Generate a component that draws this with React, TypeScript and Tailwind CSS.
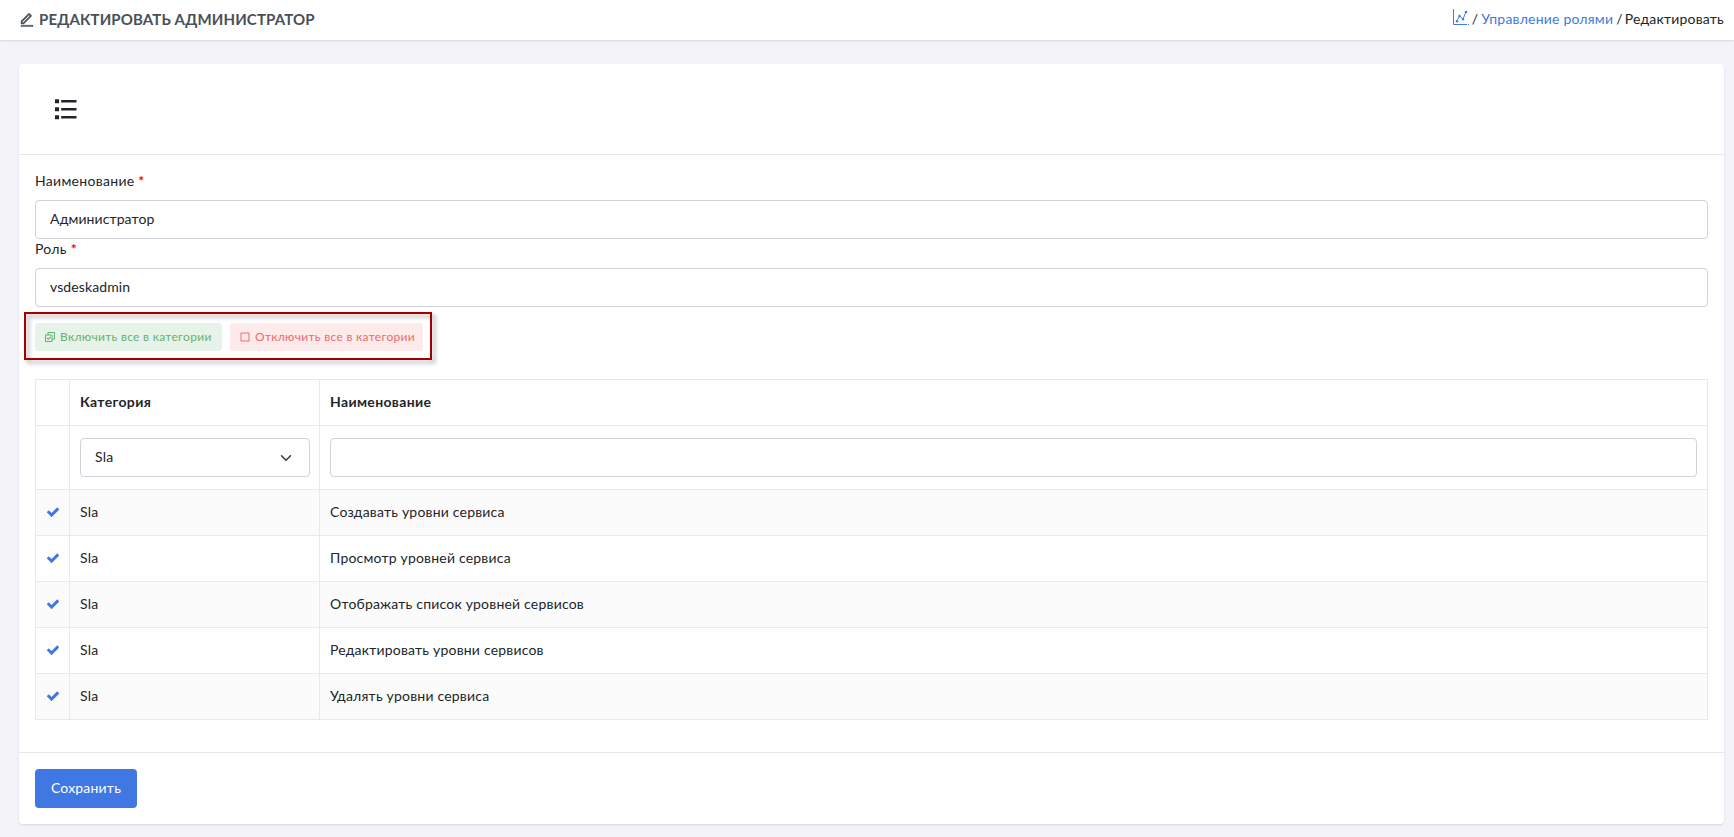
import { useState } from 'react';
import { RiCheckboxBlankLine, RiCheckboxMultipleLine, RiEditLine } from 'react-icons/ri';

interface Permission {
  id: string;
  category: string;
  title: string;
  enabled: boolean;
}

const initialPermissions: Permission[] = [
  { id: 'create', category: 'Sla', title: 'Создавать уровни сервиса', enabled: true },
  { id: 'view', category: 'Sla', title: 'Просмотр уровней сервиса', enabled: true },
  { id: 'list', category: 'Sla', title: 'Отображать список уровней сервисов', enabled: true },
  { id: 'update', category: 'Sla', title: 'Редактировать уровни сервисов', enabled: true },
  { id: 'delete', category: 'Sla', title: 'Удалять уровни сервиса', enabled: true },
];

function CheckMark() {
  return (
    <svg viewBox="0 0 1792 1792" className="w-[14px] h-[14px]" fill="currentColor">
      <path d="M1671 566q0 40-28 68l-724 724-136 136q-28 28-68 28t-68-28l-136-136-362-362q-28-28-28-68t28-68l136-136q28-28 68-28t68 28l294 295 656-657q28-28 68-28t68 28l136 136q28 28 28 68z" />
    </svg>
  );
}

function ListIcon() {
  return (
    <svg viewBox="0 0 22 21" className="w-[22px] h-[21px]" fill="currentColor">
      <path d="M0 0.3h4v4h-4zM0 8.3h4v4h-4zM0 16.3h4v4h-4z" />
      <path d="M6.2 1h15.3v2.5h-15.3zM6.2 9h15.3v2.5h-15.3zM6.2 17h15.3v2.5h-15.3z" />
    </svg>
  );
}

function ChartIcon() {
  return (
    <svg viewBox="0 0 16 16" className="w-4 h-4" fill="none" stroke="currentColor">
      <path d="M0.5 0V15.5H14M15 15.5H16" />
      <path d="M4 12L6.5 7L10 10L13 3" />
      <g fill="currentColor" stroke="none">
        <circle cx="4" cy="12.3" r="1.2" />
        <circle cx="6.5" cy="7" r="1.2" />
        <circle cx="10" cy="10.3" r="1.2" />
        <circle cx="13" cy="3" r="1.3" />
      </g>
    </svg>
  );
}

function Field({ label, initial }: { label: string; initial: string }) {
  const [value, setValue] = useState(initial);

  return (
    <label className="block">
      <span className="block h-[21px] leading-[19px] mb-2 tracking-[0.3px]">
        {label} <span className="font-bold text-[#ff0000]">*</span>
      </span>
      <input
        value={value}
        onChange={(e) => setValue(e.target.value)}
        className="block w-full h-[39px] px-[14px] pb-0.5 rounded border border-[#ced4da] bg-white tracking-[0.1px] outline-none"
      />
    </label>
  );
}

export default function App() {
  const [permissions, setPermissions] = useState(initialPermissions);
  const [category, setCategory] = useState('Sla');
  const [filter, setFilter] = useState('');

  const setAll = (enabled: boolean) => {
    setPermissions(permissions.map((p) => (p.category === category ? { ...p, enabled } : p)));
  };

  const toggle = (id: string) => {
    setPermissions(permissions.map((p) => (p.id === id ? { ...p, enabled: !p.enabled } : p)));
  };

  const rows = permissions.filter(
    (p) => p.category === category && p.title.toLowerCase().includes(filter.toLowerCase())
  );

  return (
    <div className="min-h-[837px] bg-[#f3f3f9] font-['Lato',sans-serif] text-[14px] leading-[21px] tracking-[0.2px] text-[#212529]">
      <header className="h-10 pl-[19px] pr-[10px] flex items-center justify-between bg-white shadow-[0_1px_2px_rgba(56,65,74,0.15)]">
        <h1 className="flex items-center gap-1 text-[15px] font-bold tracking-[0.12px] text-[#495057]">
          <RiEditLine className="w-4 h-4" strokeWidth="0.7" />
          <span className="pb-0.5">РЕДАКТИРОВАТЬ АДМИНИСТРАТОР</span>
        </h1>
        <nav className="flex items-center gap-[3px] pb-[3px] tracking-[0.2px]">
          <a href="#" className="-mt-[3px] text-[#3f78e3]">
            <ChartIcon />
          </a>
          <span>/</span>
          <a href="#" className="text-[#3f78e3]">Управление ролями</a>
          <span>/</span>
          <span className="-ml-px">Редактировать</span>
        </nav>
      </header>

      <main className="pl-[19px] pr-[10px] pt-6">
        <div className="bg-white rounded shadow-[0_1px_2px_rgba(56,65,74,0.15)]">
          <div className="h-[91px] pl-9 flex items-center border-b border-[#e9e9ea]">
            <ListIcon />
          </div>

          <div className="px-4 pt-4 pb-8">
            <Field label="Наименование" initial="Администратор" />
            <Field label="Роль" initial="vsdeskadmin" />

            <div className="relative w-[408px] h-12 -ml-[11px] mt-[5px] mb-[19px] pt-[11px] pl-[11px] flex items-start gap-2 text-[12px] tracking-[0.3px]">
              <button
                onClick={() => setAll(true)}
                className="w-[187px] h-7 pl-[9px] flex items-center gap-1 rounded-[3px] bg-[#e7f3e9] text-[#64b175] whitespace-nowrap"
              >
                <RiCheckboxMultipleLine className="w-3 h-3" />
                <span className="pb-px">Включить все в категории</span>
              </button>
              <button
                onClick={() => setAll(false)}
                className="w-[193px] h-7 pl-[9px] flex items-center gap-1 rounded-[3px] bg-[#fdeaea] text-[#f06a6c] whitespace-nowrap"
              >
                <RiCheckboxBlankLine className="w-3 h-3" />
                <span className="pb-px">Отключить все в категории</span>
              </button>
              {/* Highlight frame around the bulk actions */}
              <div className="absolute inset-0 border-2 border-[#a40000] drop-shadow-[3px_3px_2px_rgba(0,0,0,0.35)] pointer-events-none" />
            </div>

            <table className="w-full table-fixed border-separate border-spacing-0 border-t border-l border-[#e9e9ea] [&_td]:border-r [&_td]:border-b [&_td]:border-[#e9e9ea] [&_th]:border-r [&_th]:border-b [&_th]:border-[#e9e9ea]">
              <colgroup>
                <col className="w-[34px]" />
                <col className="w-[250px]" />
                <col />
              </colgroup>
              <thead>
                <tr className="h-[46px] text-left tracking-[0.35px]">
                  <th />
                  <th className="px-[10px] pb-0.5 font-bold">Категория</th>
                  <th className="px-[10px] pb-0.5 font-bold">Наименование</th>
                </tr>
                <tr className="h-16">
                  <td />
                  <td className="pl-[10px] pr-[9px]">
                    <div className="relative">
                      <select
                        value={category}
                        onChange={(e) => setCategory(e.target.value)}
                        className="block w-full h-[39px] pl-[14px] pb-0.5 appearance-none rounded border border-[#ced4da] bg-white outline-none"
                      >
                        <option>Sla</option>
                      </select>
                      <svg
                        viewBox="0 0 16 16"
                        className="absolute right-[18px] top-[14px] w-3 h-3 pointer-events-none"
                        fill="none"
                        stroke="#343a40"
                        strokeWidth="2"
                        strokeLinecap="round"
                        strokeLinejoin="round"
                      >
                        <path d="M2 5l6 6 6-6" />
                      </svg>
                    </div>
                  </td>
                  <td className="px-[10px]">
                    <input
                      value={filter}
                      onChange={(e) => setFilter(e.target.value)}
                      className="block w-full h-[39px] px-[14px] rounded border border-[#ced4da] bg-white outline-none"
                    />
                  </td>
                </tr>
              </thead>
              <tbody>
                {rows.map((p) => (
                  <tr key={p.id} className="h-[46px] odd:bg-[#fbfbfb]">
                    <td className="pb-0.5">
                      <button
                        onClick={() => toggle(p.id)}
                        className="w-full h-5 flex items-center justify-center text-[#3f78e3]"
                      >
                        {p.enabled && <CheckMark />}
                      </button>
                    </td>
                    <td className="px-[10px] pb-0.5">{p.category}</td>
                    <td className="px-[10px] pb-0.5">{p.title}</td>
                  </tr>
                ))}
              </tbody>
            </table>
          </div>

          <div className="p-4 border-t border-[#e9e9ea]">
            <button className="block w-[102px] h-[39px] pb-0.5 rounded bg-[#3f78e3] text-white">Сохранить</button>
          </div>
        </div>
      </main>
    </div>
  );
}
